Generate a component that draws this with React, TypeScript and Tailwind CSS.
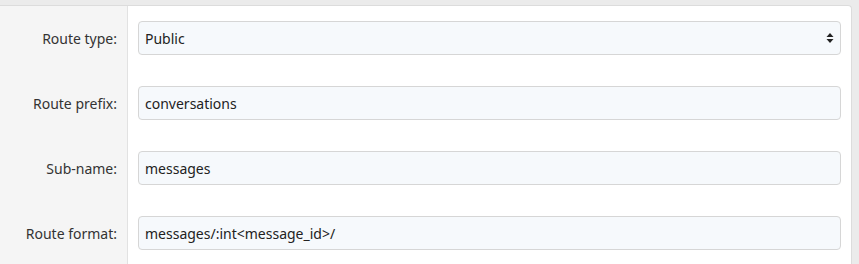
const rows = [
  { label: 'Route type:', value: 'Public', select: true },
  { label: 'Route prefix:', value: 'conversations' },
  { label: 'Sub-name:', value: 'messages' },
  { label: 'Route format:', value: 'messages/:int<message_id>/' },
]

export default function App() {
  return (
    <div
      className="h-[264px] w-[859px] overflow-hidden bg-[#ebebeb] pt-[5px] text-[14px] text-[#222]"
      style={{ fontFamily: '"Segoe UI", "Noto Sans", sans-serif' }}
    >
      <div className="flex h-full w-[852px] rounded-tr-[4px] border-t border-r border-[#dcdcdc] bg-white">
        <div className="w-[128px] shrink-0 border-r border-[#e2e2e2] bg-[#f5f5f5] pt-[15px]">
          {rows.map((r) => (
            <div key={r.label} className="mb-[31px] flex h-[34px] items-center justify-end pr-[10px] text-[#333]">
              {r.label}
            </div>
          ))}
        </div>
        <div className="flex-1 pt-[15px] pl-[10px] pr-[10px]">
          {rows.map((r) => (
            <div
              key={r.label}
              className="mb-[31px] flex h-[34px] items-center justify-between rounded-[4px] border border-[#d6d6d6] bg-[#f6f9fc] pl-[6px] pr-[6px]"
            >
              <span>{r.value}</span>
              {r.select && (
                <svg width="8" height="12" viewBox="0 0 8 12">
                  <path d="M4 1 L7.5 5 H0.5 Z" fill="#222" />
                  <path d="M4 11 L7.5 7 H0.5 Z" fill="#222" />
                </svg>
              )}
            </div>
          ))}
        </div>
      </div>
    </div>
  )
}
